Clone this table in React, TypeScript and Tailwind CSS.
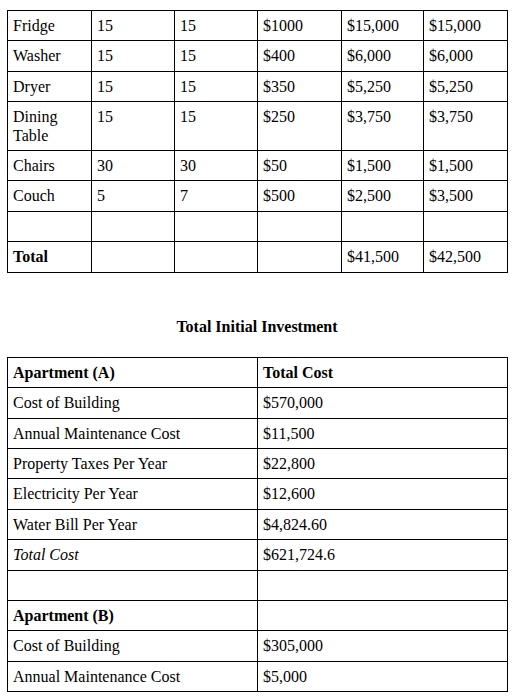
import React from "react";

const cell = "border border-black px-[5px] pt-[6px] pb-[5px] align-top text-left font-normal";

const rows1: [string, string, string, string, string, string][] = [
  ["Fridge", "15", "15", "$1000", "$15,000", "$15,000"],
  ["Washer", "15", "15", "$400", "$6,000", "$6,000"],
  ["Dryer", "15", "15", "$350", "$5,250", "$5,250"],
  ["Dining Table", "15", "15", "$250", "$3,750", "$3,750"],
  ["Chairs", "30", "30", "$50", "$1,500", "$1,500"],
  ["Couch", "5", "7", "$500", "$2,500", "$3,500"],
  ["", "", "", "", "", ""],
];

type R2 = { a: string; b: string; bold?: boolean; italic?: boolean };
const rows2: R2[] = [
  { a: "Apartment (A)", b: "Total Cost", bold: true },
  { a: "Cost of Building", b: "$570,000" },
  { a: "Annual Maintenance Cost", b: "$11,500" },
  { a: "Property Taxes Per Year", b: "$22,800" },
  { a: "Electricity Per Year", b: "$12,600" },
  { a: "Water Bill Per Year", b: "$4,824.60" },
  { a: "Total Cost", b: "$621,724.6", italic: true },
  { a: "", b: "" },
  { a: "Apartment (B)", b: "" },
  { a: "Cost of Building", b: "$305,000" },
  { a: "Annual Maintenance Cost", b: "$5,000" },
];

export default function App() {
  return (
    <div
      className="bg-white text-black text-[16px] leading-[1.15] min-h-[699px] pt-[10px] pl-[7px]"
      style={{ fontFamily: '"Liberation Serif", "Times New Roman", serif' }}
    >
      <table className="border-collapse table-fixed w-[501px]">
        <colgroup>
          <col className="w-[84px]" />
          <col className="w-[83px]" />
          <col className="w-[83px]" />
          <col className="w-[84px]" />
          <col className="w-[82px]" />
          <col className="w-[84px]" />
        </colgroup>
        <tbody>
          {rows1.map((r, i) => (
            <tr key={i}>
              {r.map((c, j) => (
                <td key={j} className={cell}>
                  {c === "" ? <span>&nbsp;</span> : c}
                </td>
              ))}
            </tr>
          ))}
          <tr>
            <td className={cell + " !font-bold"}>Total</td>
            <td className={cell}>&nbsp;</td>
            <td className={cell}>&nbsp;</td>
            <td className={cell}>&nbsp;</td>
            <td className={cell}>$41,500</td>
            <td className={cell}>$42,500</td>
          </tr>
        </tbody>
      </table>

      <p className="mt-[45px] mb-[21px] w-[500px] text-center font-bold">Total Initial Investment</p>

      <table className="border-collapse table-fixed w-[501px]">
        <colgroup>
          <col className="w-[250px]" />
          <col className="w-[250px]" />
        </colgroup>
        <tbody>
          {rows2.map((r, i) => (
            <tr key={i}>
              <td className={cell + (r.bold || r.a.startsWith("Apartment") ? " !font-bold" : "") + (r.italic ? " italic" : "")}>
                {r.a === "" ? <span>&nbsp;</span> : r.a}
              </td>
              <td className={cell + (r.bold ? " !font-bold" : "")}>
                {r.b === "" ? <span>&nbsp;</span> : r.b}
              </td>
            </tr>
          ))}
        </tbody>
      </table>
    </div>
  );
}
